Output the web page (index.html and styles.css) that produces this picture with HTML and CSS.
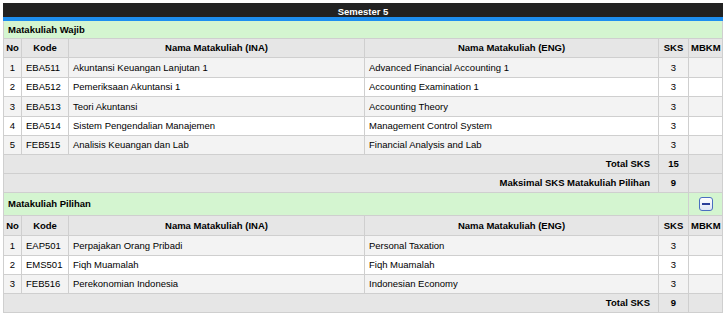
FILE: index.html
```html
<!DOCTYPE html>
<html>
<head>
<meta charset="utf-8">
<link rel="stylesheet" href="styles.css">
</head>
<body>
<table class="krs">
  <colgroup>
    <col class="c-no"><col class="c-kode"><col class="c-ina"><col class="c-eng"><col class="c-sks"><col class="c-mbkm">
  </colgroup>
  <tr><th colspan="6" class="title">Semester 5</th></tr>
  <tr class="group"><td colspan="6">Matakuliah Wajib</td></tr>
  <tr class="head"><th>No</th><th>Kode</th><th>Nama Matakuliah (INA)</th><th>Nama Matakuliah (ENG)</th><th>SKS</th><th>MBKM</th></tr>
  <tr class="odd tall"><td class="ctr">1</td><td>EBA511</td><td>Akuntansi Keuangan Lanjutan 1</td><td>Advanced Financial Accounting 1</td><td class="ctr">3</td><td></td></tr>
  <tr class="even"><td class="ctr">2</td><td>EBA512</td><td>Pemeriksaan Akuntansi 1</td><td>Accounting Examination 1</td><td class="ctr">3</td><td></td></tr>
  <tr class="odd tall"><td class="ctr">3</td><td>EBA513</td><td>Teori Akuntansi</td><td>Accounting Theory</td><td class="ctr">3</td><td></td></tr>
  <tr class="even"><td class="ctr">4</td><td>EBA514</td><td>Sistem Pengendalian Manajemen</td><td>Management Control System</td><td class="ctr">3</td><td></td></tr>
  <tr class="odd"><td class="ctr">5</td><td>FEB515</td><td>Analisis Keuangan dan Lab</td><td>Financial Analysis and Lab</td><td class="ctr">3</td><td></td></tr>
  <tr class="sum"><td colspan="4" class="lbl">Total SKS</td><td class="ctr">15</td><td></td></tr>
  <tr class="sum"><td colspan="4" class="lbl">Maksimal SKS Matakuliah Pilihan</td><td class="ctr">9</td><td></td></tr>
  <tr class="group big"><td colspan="5">Matakuliah Pilihan</td><td class="ctr"><span class="toggle"><span class="bar"></span></span></td></tr>
  <tr class="head tall"><th>No</th><th>Kode</th><th>Nama Matakuliah (INA)</th><th>Nama Matakuliah (ENG)</th><th>SKS</th><th>MBKM</th></tr>
  <tr class="odd tall"><td class="ctr">1</td><td>EAP501</td><td>Perpajakan Orang Pribadi</td><td>Personal Taxation</td><td class="ctr">3</td><td></td></tr>
  <tr class="even"><td class="ctr">2</td><td>EMS501</td><td>Fiqh Muamalah</td><td>Fiqh Muamalah</td><td class="ctr">3</td><td></td></tr>
  <tr class="odd"><td class="ctr">3</td><td>FEB516</td><td>Perekonomian Indonesia</td><td>Indonesian Economy</td><td class="ctr">3</td><td></td></tr>
  <tr class="sum"><td colspan="4" class="lbl">Total SKS</td><td class="ctr">9</td><td></td></tr>
</table>
</body>
</html>
```
FILE: styles.css
```css
html, body {
  margin: 0;
  background: #fff;
}
body {
  padding: 3px;
  font-family: "Liberation Sans", Arial, sans-serif;
  font-size: 9.5px;
  color: #000;
}
.krs {
  width: 719px;
  border-collapse: collapse;
  table-layout: fixed;
}
.c-no { width: 18px; }
.c-kode { width: 47px; }
.c-ina { width: 296px; }
.c-eng { width: 294px; }
.c-sks { width: 30px; }
.c-mbkm { width: 34px; }
.krs td, .krs th {
  border: 1px solid #cfcfcf;
  padding: 0 3px 0 4px;
  height: 18px;
  line-height: 12px;
  text-align: left;
  white-space: nowrap;
}
.krs tr.tall td, .krs tr.tall th {
  height: 19px;
}
.krs th.title {
  background: #222222;
  color: #fff;
  text-align: center;
  height: 11px;
  padding: 2px 0 0 0;
  line-height: 11px;
  border: 1px solid #222;
  border-bottom: 4px solid #1e8ff0;
  font-weight: bold;
}
.krs .group td {
  background: #d4f5d0;
  font-weight: bold;
  height: 17px;
}
.krs .group.big td {
  height: 22px;
}
.head th {
  background: #e6e6e6;
  font-weight: bold;
  text-align: center;
  padding: 0 2px;
}
.odd td { background: #f3f3f3; }
.even td { background: #ffffff; }
.sum td {
  background: #e6e6e6;
  font-weight: bold;
}
.krs td.lbl {
  text-align: right;
  padding-right: 8px;
}
.krs td.ctr {
  text-align: center;
  padding: 0;
}
.toggle {
  display: inline-flex;
  align-items: center;
  justify-content: center;
  width: 12px;
  height: 12px;
  border: 1px solid #4a6fc0;
  border-radius: 3px;
  background: linear-gradient(#ffffff, #dfe6f5);
  vertical-align: middle;
}
.toggle .bar {
  display: block;
  width: 8px;
  height: 2px;
  background: #2b3f9a;
}
```
